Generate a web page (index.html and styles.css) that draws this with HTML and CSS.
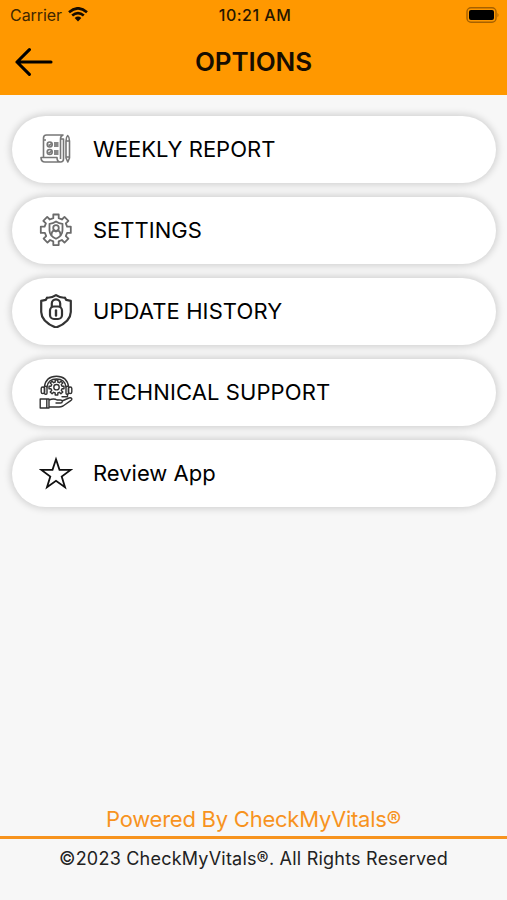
FILE: index.html
```html
<!DOCTYPE html>
<html lang="en">
<head>
<meta charset="utf-8">
<title>Options</title>
<link rel="stylesheet" href="styles.css">
</head>
<body>
<div class="screen">
  <header class="header">
    <div class="status">
      <div class="carrier"><span class="carrier-name">Carrier</span>
        <svg class="wifi" viewBox="0 0 20 15" width="20" height="15"><g fill="none" stroke="#160c00" stroke-width="2.6"><path d="M1 5.2Q10-2.6 19 5.2"/><path d="M4.2 8.6Q10 3.6 15.8 8.6"/></g><path d="M6.7 11Q10 8.2 13.3 11L10 14.4Z" fill="#160c00"/></svg>
      </div>
      <time class="time">10:21 AM</time>
      <svg class="battery" viewBox="0 0 34 16" width="34" height="16"><rect x="1" y=".8" width="29" height="14.4" rx="4" fill="none" stroke="#a66100" stroke-width="1.4"/><rect x="3" y="3" width="25" height="10" rx="2" fill="#000"/><path d="M31.5 5.7q2 2.3 0 4.6Z" fill="#a66100"/></svg>
    </div>
    <div class="titlebar">
      <svg class="back" viewBox="0 0 38 28" width="38" height="28"><path d="M14.4 1.7 2 14l12.4 12.3M2 14H36" fill="none" stroke="#000" stroke-width="3.1" stroke-linecap="round" stroke-linejoin="round"/></svg>
      <h1 class="title">OPTIONS</h1>
    </div>
  </header>
  <main class="menu">
    <a class="item">
      <svg class="icon" viewBox="0 0 34 34"><g fill="none" stroke="#777" stroke-width="1.6" stroke-linejoin="round"><path d="M4.500 25V6q0-3 3-3H24q-2.500 1-2.500 4V27M4.500 8H7M2 25.500H18q0 4.500 3.500 4.500H6q-4 0-4-4.500ZM21.500 30q3 0 3-3V7H21.500"/><circle cx="10.700" cy="12.500" r="2.500"/><circle cx="10.700" cy="20" r="2.500"/><path d="m9.500 12.500 1 1 2-2M9.500 20l1 1 2-2"/><path d="M27 9q0-4 1.700-5.500Q30.500 5 30.500 9V26l-1.700 4L27 26ZM27 9h3.500M27 25h3.500"/></g><path d="M15 10h4.500v5H15zM15 18h4.500v5H15z" fill="#888"/></svg>
      <span class="label">WEEKLY REPORT</span>
    </a>
    <a class="item">
      <svg class="icon" viewBox="0 0 34 34"><g fill="none" stroke="#6b6b6b" stroke-width="1.800" stroke-linejoin="round"><path d="M14.300 1.500h5.400v3.700l3.200 1.300 2.600-2.600 3.900 3.900-2.600 2.600 1.300 3.200h3.700v6.300h-3.700l-1.300 3.200 2.600 2.600-3.900 3.900-2.600-2.600-3.200 1.300v3.800h-5.400v-3.800l-3.200-1.300-2.600 2.600-3.900-3.900 2.600-2.600-1.300-3.200H1.800v-6.300h3.800l1.300-3.200-2.600-2.600 3.900-3.900 2.600 2.600 3.500-1.300Z"/><path d="M17 8.500q3 2.300 6.500 2.300v6.500q0 5.500-6.500 8.500-6.500-3-6.500-8.500v-6.500q3.500 0 6.500-2.300Z"/><circle cx="17" cy="15" r="2.800"/><path d="M12.500 22q0-4 3-4.500l1.500 1 1.500-1q3 .5 3 4.500"/></g></svg>
      <span class="label">SETTINGS</span>
    </a>
    <a class="item">
      <svg class="icon" viewBox="0 0 34 34"><g fill="none" stroke="#333" stroke-width="2.200" stroke-linejoin="round"><path d="M17 1.200Q21 4 26 3.700l1.200 2.200 4.600 1V18Q31.500 28 17 33.600 2.500 28 2.200 18V6.900l4.600-1L8 3.700Q13 4 17 1.200Z"/><rect x="11" y="12.500" width="12" height="12.500" rx="4"/><path d="M12.800 13V9.500a4.200 4.200 0 0 1 8.400 0V13"/></g><path d="M17 16.500v5" stroke="#333" stroke-width="2.400" stroke-linecap="round"/></svg>
      <span class="label history">UPDATE HISTORY</span>
    </a>
    <a class="item">
      <svg class="icon" viewBox="0 0 34 34"><g fill="none" stroke="#333" stroke-width="1.400" stroke-linejoin="round" stroke-linecap="round"><path d="M5.300 12Q7 1.300 17.500 1.300T29.700 12M8 12q1-8 9.500-8T27 12"/><rect x="2.200" y="12" width="3.300" height="6.500" rx="1.600"/><rect x="5.500" y="11.200" width="2.500" height="8" rx="1"/><rect x="29.500" y="12" width="3.300" height="6.500" rx="1.600"/><rect x="27" y="11.200" width="2.500" height="8" rx="1"/><path d="M28.500 19.200v2.500H23"/><circle cx="17.500" cy="12.200" r="2.700"/><path d="M16.200 5h2.600v2l1.600.7 1.500-1.500 1.900 1.900-1.500 1.500.7 1.600h2v2.600h-2l-.7 1.600 1.500 1.500-1.900 1.900-1.500-1.500-1.600.7v2h-2.600v-2l-1.600-.7-1.500 1.500-1.900-1.900 1.500-1.500-.7-1.600h-2v-2.600h2l.7-1.600-1.500-1.500 1.900-1.900 1.500 1.500 1.600-.7Z"/><path d="M1.200 24h6.600v9H1.200ZM7.800 24H10v9H7.800M10 25q5-2 8 0h3.500q1.800 0 1.800 1.500T21.500 28H17M23 26l7-3q2-.6 2.700.6.500 1.200-1 2L24 31q-2 1-4 1H10"/></g></svg>
      <span class="label support">TECHNICAL SUPPORT</span>
    </a>
    <a class="item">
      <svg class="icon" viewBox="0 0 34 34"><path d="m17 3.300 3.500 10.500 11.100.1-8.900 6.600 3.300 10.700-9-6.400-9 6.400 3.300-10.700-8.900-6.600 11.100-.1Z" fill="none" stroke="#111" stroke-width="1.800"/></svg>
      <span class="label">Review App</span>
    </a>
  </main>
  <footer class="footer">
    <p class="powered">Powered By CheckMyVitals®</p>
    <p class="copyright">©2023 CheckMyVitals®. All Rights Reserved</p>
  </footer>
</div>
</body>
</html>
```
FILE: styles.css
```css
* { box-sizing: border-box; }
body, h1, p { margin: 0; }
body { background: #f7f7f7; color: #000; font-family: Inter, sans-serif; }
.screen { height: 900px; display: flex; flex-direction: column; overflow: hidden; }
.header { height: 95px; flex: none; background: #ff9800; }
.status { height: 29px; padding: 0 7px 0 10px; display: grid; grid-template-columns: 1fr auto 1fr; align-items: center; }
.carrier { display: flex; align-items: center; gap: 6px; font-size: 16px; color: #402600; }
.carrier-name { letter-spacing: -.05px; }
.time { font-size: 16px; font-weight: 500; letter-spacing: .5px; color: #251600; }
.battery { justify-self: end; }
.titlebar { height: 66px; display: grid; grid-template-columns: 38px 1fr 38px; align-items: center; padding: 0 15px; }
.back { display: block; }
.title { font-size: 26px; line-height: 32px; font-weight: 600; letter-spacing: -.1px; text-align: center; color: #160d00; }
.menu { display: flex; flex-direction: column; gap: 14px; padding: 20.500px 11px 0 12px; }
.item { height: 67px; display: flex; align-items: center; padding-left: 26.500px; border-radius: 34px; background: #fff; box-shadow: 0 0 7px 2px rgba(0, 0, 0, .15); }
.icon { width: 34px; height: 34px; flex: none; margin-right: 20.500px; }
.label { font-size: 22px; line-height: 28px; white-space: nowrap; }
.history { letter-spacing: .1px; }
.support { letter-spacing: .1px; }
.footer { margin-top: auto; height: 99px; text-align: center; white-space: nowrap; }
.powered { height: 38px; padding-top: 4px; line-height: 28px; font-size: 22px; letter-spacing: -.24px; color: #f7931e; border-bottom: 3px solid #f7931e; }
.copyright { padding-top: 8px; font-size: 18px; line-height: 24px; letter-spacing: .22px; color: #222; }
```
